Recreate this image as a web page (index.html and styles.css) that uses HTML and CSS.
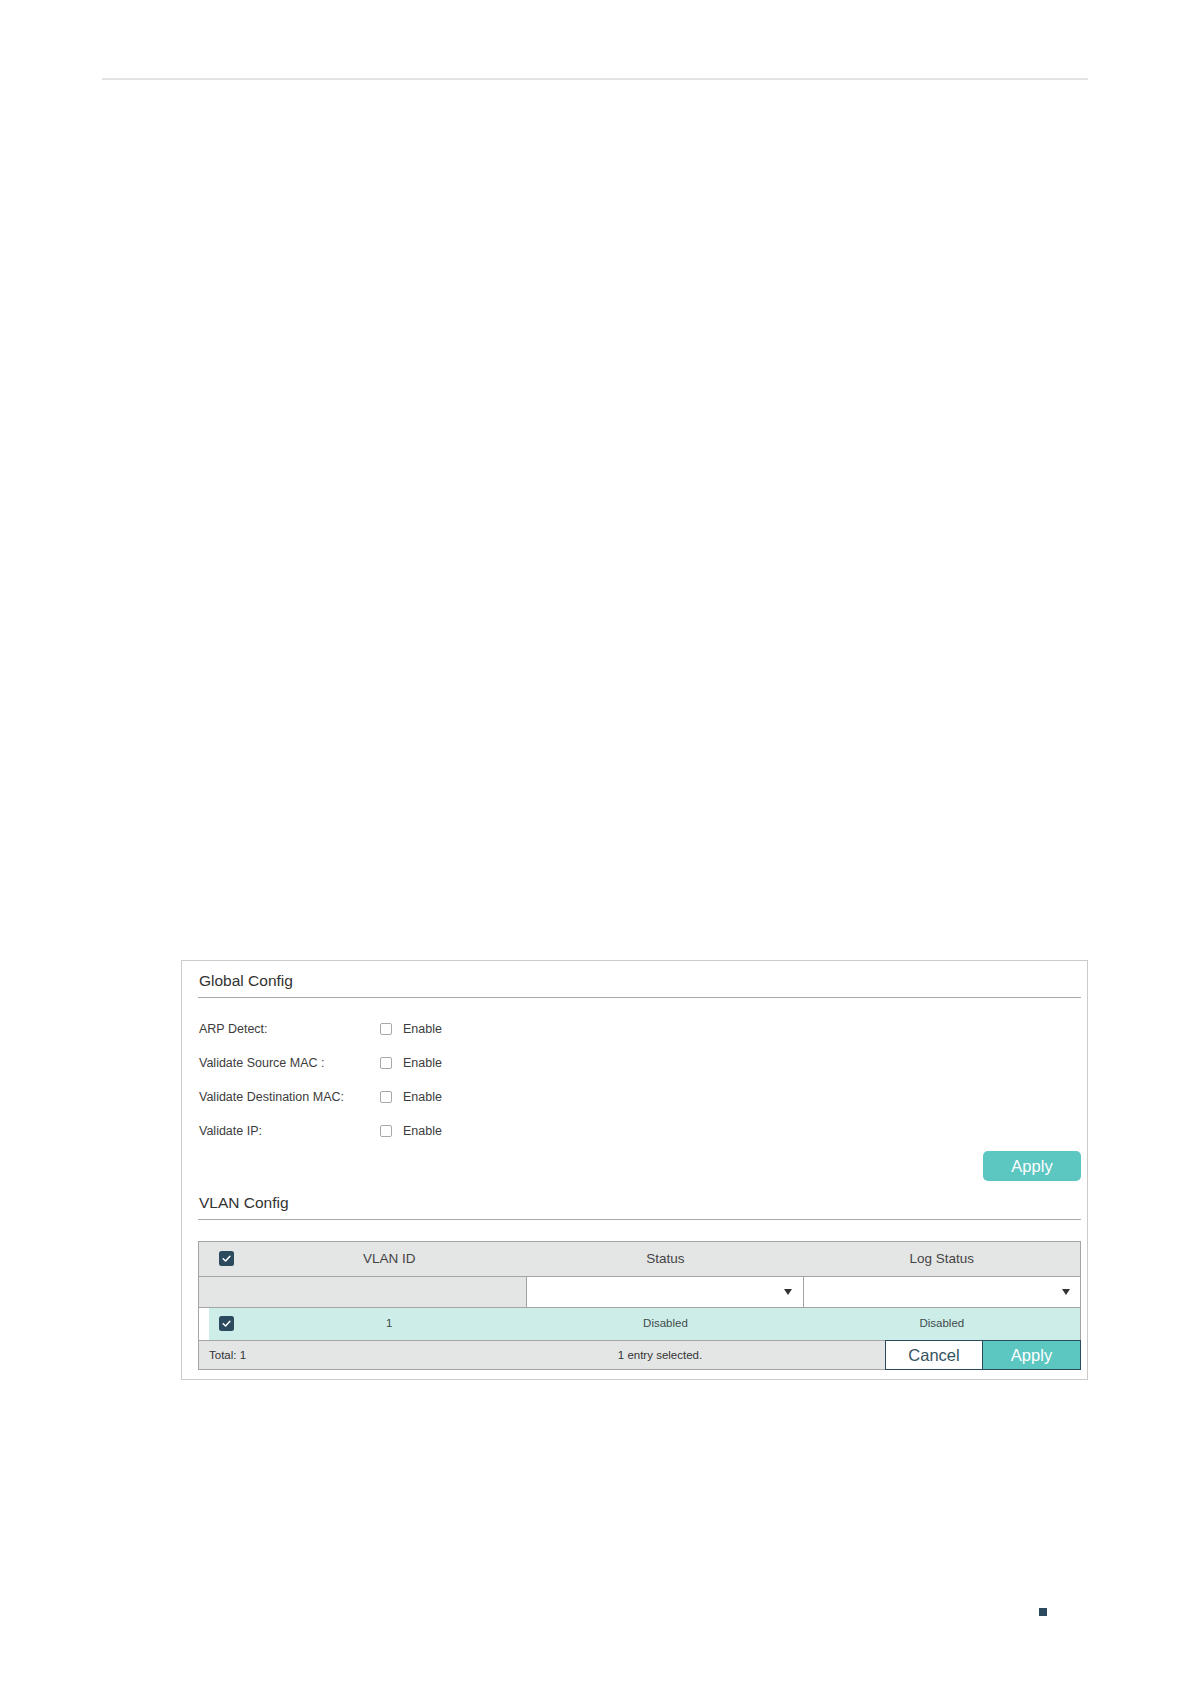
FILE: index.html
```html
<!DOCTYPE html>
<html lang="en">
<head>
    <meta charset="UTF-8">
    <meta name="viewport" content="width=device-width, initial-scale=1.0">
    <title>ARP Detection</title>
    <link rel="stylesheet" href="styles.css">
</head>
<body>
    <div class="page">
        <div class="top-rule"></div>

        <div class="panel">
            <h2 class="section-title">Global Config</h2>
            <div class="form-rows">
                <div class="form-row">
                    <span class="label">ARP Detect:</span>
                    <label class="check"><span class="box"></span>Enable</label>
                </div>
                <div class="form-row">
                    <span class="label">Validate Source MAC :</span>
                    <label class="check"><span class="box"></span>Enable</label>
                </div>
                <div class="form-row">
                    <span class="label">Validate Destination MAC:</span>
                    <label class="check"><span class="box"></span>Enable</label>
                </div>
                <div class="form-row">
                    <span class="label">Validate IP:</span>
                    <label class="check"><span class="box"></span>Enable</label>
                </div>
            </div>
            <div class="actions">
                <button class="btn-apply">Apply</button>
            </div>

            <h2 class="section-title">VLAN Config</h2>
            <div class="grid-table">
                <div class="row head">
                    <div class="cell cb">
                        <svg width="15" height="15" viewBox="0 0 15 15"><rect width="15" height="15" rx="2.5" fill="#2c4a5d"/><path d="M4.2 7.7 L6.6 10 L10.9 5.3" fill="none" stroke="#fff" stroke-width="1.5" stroke-linecap="round" stroke-linejoin="round"/></svg>
                    </div>
                    <div class="cell">VLAN ID</div>
                    <div class="cell">Status</div>
                    <div class="cell">Log Status</div>
                </div>
                <div class="row filter">
                    <div class="cell blank"></div>
                    <div class="cell select"><span class="caret"></span></div>
                    <div class="cell select last"><span class="caret"></span></div>
                </div>
                <div class="row data">
                    <div class="cell cb">
                        <svg width="15" height="15" viewBox="0 0 15 15"><rect width="15" height="15" rx="2.5" fill="#2c4a5d"/><path d="M4.2 7.7 L6.6 10 L10.9 5.3" fill="none" stroke="#fff" stroke-width="1.5" stroke-linecap="round" stroke-linejoin="round"/></svg>
                    </div>
                    <div class="cell">1</div>
                    <div class="cell">Disabled</div>
                    <div class="cell">Disabled</div>
                </div>
                <div class="row foot">
                    <span class="total">Total: 1</span>
                    <span class="selected">1 entry selected.</span>
                    <div class="foot-buttons">
                        <button class="btn-cancel">Cancel</button>
                        <button class="btn-save">Apply</button>
                    </div>
                </div>
            </div>
        </div>

        <div class="page-mark"></div>
    </div>
</body>
</html>
```

FILE: styles.css
```css
/* --- Base --- */
:root {
    --navy: #2c4a5d;
    --teal: #5cc6c1;
    --teal-light: #cdeee8;
    --gray-bg: #e4e6e6;
    --line: #a4a4a4;
    --text: #3c3c3c;
}
*, *::before, *::after { box-sizing: border-box; margin: 0; padding: 0; }
body {
    font-family: "Liberation Sans", Arial, sans-serif;
    color: var(--text);
    background: #fff;
}
.page { width: 1191px; min-height: 1684px; padding-top: 78px; }
.top-rule { margin-left: 102px; width: 986px; height: 2px; background: #e3e3e3; }

/* --- Panel --- */
.panel {
    margin: 880px 0 0 181px;
    width: 907px;
    border: 1px solid #cbcbcb;
    padding: 10px 6px 9px 16px;
}
.section-title {
    font-size: 15.5px;
    font-weight: normal;
    line-height: 20px;
    color: #333;
    padding: 0 0 6px 1px;
    border-bottom: 1px solid #a9a9a9;
}
.form-rows { margin-top: 14px; }
.form-row { display: flex; align-items: center; height: 34px; font-size: 12.5px; }
.form-row .label { width: 182px; padding-left: 1px; }
.check { display: flex; align-items: center; gap: 11px; cursor: pointer; }
.check .box { width: 12px; height: 12px; border: 1px solid #a8a8a8; border-radius: 2px; background: #fff; }

.actions { display: flex; justify-content: flex-end; margin: 3px 0 12px; }
.btn-apply {
    width: 98px; height: 30px;
    border: none; border-radius: 5px;
    background: var(--teal); color: #fff;
    font-family: inherit; font-size: 16.5px;
}

/* --- Table --- */
.grid-table { margin-top: 21px; border: 1px solid var(--line); }
.row { display: grid; grid-template-columns: 52px 1fr 1fr 1fr; align-items: center; }
.row .cell { text-align: center; }
.row .cb { display: flex; justify-content: flex-start; padding-left: 20px; }
.row .cb svg { display: block; }

.head { height: 35px; padding-bottom: 1px; background: var(--gray-bg); border-bottom: 1px solid var(--line); font-size: 13.5px; color: #444; }
.filter { height: 31px; grid-template-columns: 328px 1fr 1fr; align-items: stretch; border-bottom: 1px solid var(--line); }
.filter .blank { background: var(--gray-bg); border-right: 1px solid var(--line); }
.filter .select { display: flex; align-items: center; justify-content: flex-end; padding-right: 11px; background: #fff; border-right: 1px solid var(--line); }
.filter .select.last { border-right: none; padding-right: 10px; }
.caret { width: 0; height: 0; border-left: 4.5px solid transparent; border-right: 4.5px solid transparent; border-top: 6px solid #333; }

.data { height: 33px; padding-bottom: 3px; background: var(--teal-light); box-shadow: inset 10px 0 0 #fff; border-bottom: 1px solid var(--line); font-size: 11.5px; color: #3f4b4b; }
.data .cb { padding-top: 1px; }

.foot { display: flex; align-items: stretch; height: 28px; background: var(--gray-bg); font-size: 11.5px; color: #333; }
.foot .total { flex: 0 0 318px; padding-left: 10px; display: flex; align-items: center; }
.foot .selected { flex: 0 0 286px; display: flex; align-items: center; justify-content: center; }
.foot-buttons { margin: -1px -1px -1px auto; display: flex; }
.foot-buttons button { width: 98px; height: 30px; font-family: inherit; font-size: 16.5px; border: 1px solid var(--navy); }
.btn-cancel { background: #fff; color: #35535f; }
.btn-save { background: var(--teal); color: #fff; border-left: none !important; }

.page-mark { margin: 228px 0 0 1039px; width: 8px; height: 8px; background: var(--navy); }
```
